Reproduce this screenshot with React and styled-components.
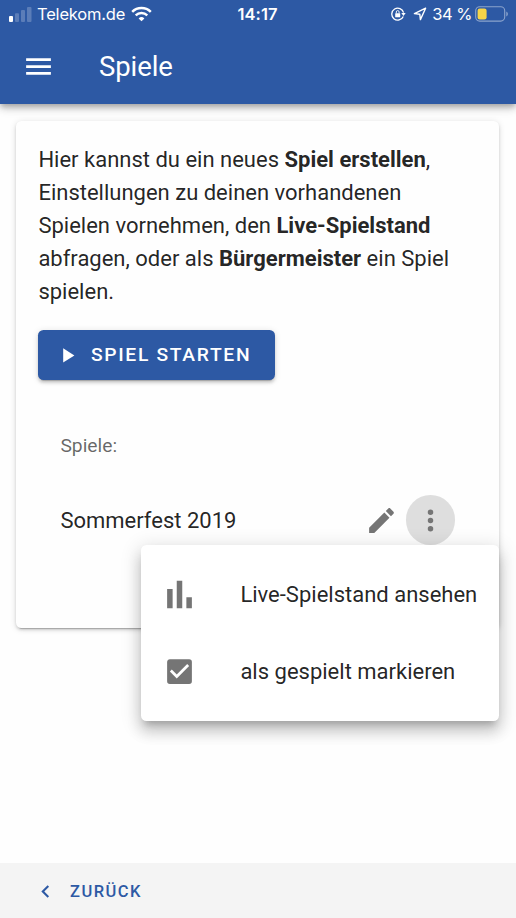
import React from "react";
import styled, { createGlobalStyle } from "styled-components";

const BLUE = "#2d59a4";
const INK = "rgba(0, 0, 0, 0.87)";
const GREY = "#757575";

const GlobalStyle = createGlobalStyle`
  * { box-sizing: border-box; }
  body {
    margin: 0;
    background: #fefefe;
    font-family: Roboto, "Liberation Sans", sans-serif;
    color: ${INK};
  }
  button { border: 0; margin: 0; padding: 0; background: none; font: inherit; color: inherit; }
`;

const Screen = styled.div`
  height: 918px;
  display: flex;
  flex-direction: column;
  overflow: hidden;
`;

const Header = styled.header`
  flex: none;
  height: 104px;
  background: ${BLUE};
  color: #fff;
  z-index: 1;
  box-shadow: 0 3px 5px -1px rgba(0, 0, 0, 0.2), 0 5px 7px rgba(0, 0, 0, 0.14),
    0 1px 14px rgba(0, 0, 0, 0.12);
`;

const StatusBar = styled.div`
  height: 28px;
  padding: 0 8px 0 9px;
  display: grid;
  grid-template-columns: 1fr auto 1fr;
  align-items: center;
  font: 400 16.5px/28px Inter, "Liberation Sans", sans-serif;
`;

const StatusGroup = styled.div`
  display: flex;
  align-items: center;
  justify-content: ${(p) => (p.$end ? "flex-end" : "flex-start")};
  height: 28px;
`;

const Carrier = styled.span`
  margin: 0 6px 0 5px;
  letter-spacing: -0.2px;
`;

const Clock = styled.time`
  font-weight: 600;
  letter-spacing: 0.1px;
  transform: translateX(-1px);
`;

const Percent = styled.span`
  margin: 0 3px 0 5px;
  letter-spacing: -0.5px;
`;

const Toolbar = styled.div`
  height: 76px;
  padding: 0 22px;
  display: flex;
  align-items: center;
`;

const ToolbarTitle = styled.h1`
  margin: 0 0 0 44px;
  font-size: 27.5px;
  font-weight: 400;
  line-height: 41px;
  letter-spacing: -0.1px;
`;

const Icon = styled.svg`
  display: block;
  flex: none;
  width: ${(p) => p.$size}px;
  height: ${(p) => p.$size}px;
  fill: currentColor;
`;

const Content = styled.main`
  flex: 1;
  min-height: 0;
  padding: 17px 17px 0 16px;
`;

const Card = styled.section`
  height: 506.5px;
  padding: 21.5px 21.6px 22px 22.4px;
  border-radius: 5.5px;
  background: #fefefe;
  box-shadow: 0 4px 1px -3px rgba(0, 0, 0, 0.2), 0 2px 3px rgba(0, 0, 0, 0.14),
    0 1px 7px rgba(0, 0, 0, 0.12);
`;

const Intro = styled.p`
  margin: 0 0 22.5px;
  font-size: 22px;
  line-height: 33px;
`;

const StartButton = styled.button`
  display: flex;
  align-items: center;
  width: 237px;
  height: 49.5px;
  padding: 0 17px;
  gap: 11px;
  border-radius: 5.5px;
  background: ${BLUE};
  color: #fff;
  font-size: 19.27px;
  font-weight: 500;
  letter-spacing: 1.68px;
  white-space: nowrap;
  box-shadow: 0 4px 1px -3px rgba(0, 0, 0, 0.2), 0 3px 3px rgba(0, 0, 0, 0.14),
    0 1px 7px rgba(0, 0, 0, 0.12);
`;

const List = styled.div`
  margin-top: 33px;
  padding: 0 22px;
`;

const Subheader = styled.div`
  height: 66px;
  display: flex;
  align-items: center;
  font-size: 19.27px;
  color: rgba(0, 0, 0, 0.6);
`;

const GameRow = styled.div`
  position: relative;
  height: 83px;
  display: flex;
  align-items: center;
  font-size: 22px;
`;

const GameName = styled.span`
  flex: 1;
`;

const IconButton = styled.button`
  display: grid;
  place-items: center;
  width: 49.5px;
  height: 49.5px;
  border-radius: 50%;
  color: ${GREY};
  background: ${(p) => (p.$active ? "#dedede" : "transparent")};
`;

const Menu = styled.div`
  position: absolute;
  top: 66px;
  right: -44px;
  width: 358px;
  height: 176px;
  padding: 11px 0;
  border-radius: 5.5px;
  background: #fff;
  box-shadow: 0 7px 7px -4px rgba(0, 0, 0, 0.2), 0 11px 14px 1px rgba(0, 0, 0, 0.14),
    0 4px 19px 3px rgba(0, 0, 0, 0.12);
`;

const MenuItem = styled.div`
  height: 77px;
  padding: 0 22px 0 21.5px;
  display: flex;
  align-items: center;
  gap: 44.5px;
  white-space: nowrap;

  svg { color: ${GREY}; }
`;

const Footer = styled.footer`
  flex: none;
  height: 55px;
  padding: 0 33px;
  background: #f4f4f4;
`;

const BackButton = styled.button`
  height: 56px;
  display: flex;
  align-items: center;
  gap: 12px;
  color: ${BLUE};
  font-size: 16.5px;
  font-weight: 500;
  letter-spacing: 1.47px;
`;

const PATHS = {
  menu: "M3 6h18v2H3V6m0 5h18v2H3v-2m0 5h18v2H3v-2z",
  play: "M8 5.14v14l11-7-11-7z",
  pencil:
    "M20.71 7.04c.39-.39.39-1.04 0-1.41l-2.34-2.34c-.37-.39-1.02-.39-1.41 0l-1.84 1.83 3.75 3.75M3 17.25V21h3.75L17.81 9.93l-3.75-3.75L3 17.25z",
  dots: "M12 16a2 2 0 1 1 0 4 2 2 0 0 1 0-4m0-6a2 2 0 1 1 0 4 2 2 0 0 1 0-4m0-6a2 2 0 1 1 0 4 2 2 0 0 1 0-4z",
  chart: "M3 22V8h4v14H3m7 0V2h4v20h-4m7 0v-8h4v8h-4z",
  checkbox:
    "M10 17l-5-5 1.41-1.42L10 14.17l7.59-7.59L19 8m0-5H5c-1.11 0-2 .89-2 2v14a2 2 0 0 0 2 2h14a2 2 0 0 0 2-2V5a2 2 0 0 0-2-2z",
  chevron: "M15.41 16.58 10.83 12l4.58-4.59L14 6l-6 6 6 6 1.41-1.42z",
};

const MdIcon = ({ name, size = 33 }) => (
  <Icon $size={size} viewBox="0 0 24 24" aria-hidden="true">
    <path d={PATHS[name]} />
  </Icon>
);

const StatusSvg = styled.svg`
  display: block;
  flex: none;
  margin-right: ${(p) => p.$gap || 0}px;
`;

const Signal = () => (
  <StatusSvg width="23" height="16" fill="#fff">
    <rect x="0" y="10" width="4" height="6" rx="1" />
    <g opacity="0.22">
      <rect x="6" y="7.2" width="4" height="8.8" rx="1" />
      <rect x="12" y="4" width="4" height="12" rx="1" />
      <rect x="18" y="1" width="4.5" height="15" rx="1" />
    </g>
  </StatusSvg>
);

const Wifi = () => (
  <StatusSvg width="21" height="16" viewBox="0 0 21 16" fill="none" stroke="#fff">
    <path d="M1.2 5.8a13.3 13.3 0 0 1 18.6 0" strokeWidth="2.5" />
    <path d="M4.7 9.3a8.3 8.3 0 0 1 11.6 0" strokeWidth="2.4" />
    <path d="M10.5 15.3 7.6 12.4a4.2 4.2 0 0 1 5.8 0z" fill="#fff" stroke="none" />
  </StatusSvg>
);

const RotationLock = () => (
  <StatusSvg $gap={7} width="15" height="14" viewBox="0 0 15 14" fill="none" stroke="#fff">
    <path d="M12.3 9.5A6 6 0 1 1 12.6 5.6" strokeWidth="1.3" />
    <path d="M10.3 6h4.4l-2.2 2.9z" fill="#fff" stroke="none" />
    <rect x="4.2" y="6.2" width="5" height="4" rx="0.5" fill="#fff" stroke="none" />
    <path d="M5.3 6.4V5a1.4 1.4 0 0 1 2.8 0v1.4" strokeWidth="0.9" />
  </StatusSvg>
);

const Location = () => (
  <StatusSvg width="14" height="14" viewBox="0 0 14 14" fill="none" stroke="#fff">
    <path d="M12.6 1.2 1.4 6.6l5.4.6.6 5.4z" strokeWidth="1.4" strokeLinejoin="round" />
  </StatusSvg>
);

const Battery = () => (
  <StatusSvg width="33" height="16" viewBox="0 0 33 16">
    <rect x="0.7" y="0.7" width="29" height="14.4" rx="4" fill="none" stroke="#fff" strokeOpacity="0.45" strokeWidth="1.1" />
    <rect x="2.6" y="2.6" width="9" height="10.8" rx="2.2" fill="#f7d548" />
    <path d="M31.4 5.5q1.4.6 1.4 2.5t-1.4 2.5z" fill="#fff" fillOpacity="0.5" />
  </StatusSvg>
);

export default function App() {
  return (
    <Screen>
      <GlobalStyle />
      <Header>
        <StatusBar>
          <StatusGroup>
            <Signal />
            <Carrier>Telekom.de</Carrier>
            <Wifi />
          </StatusGroup>
          <Clock>14:17</Clock>
          <StatusGroup $end>
            <RotationLock />
            <Location />
            <Percent>34 %</Percent>
            <Battery />
          </StatusGroup>
        </StatusBar>
        <Toolbar>
          <button aria-label="Menü">
            <MdIcon name="menu" />
          </button>
          <ToolbarTitle>Spiele</ToolbarTitle>
        </Toolbar>
      </Header>
      <Content>
        <Card>
          <Intro>
            Hier kannst du ein neues <b>Spiel erstellen</b>, Einstellungen zu deinen
            vorhandenen Spielen vornehmen, den <b>Live-Spielstand</b> abfragen, oder als{" "}
            <b>Bürgermeister</b> ein Spiel spielen.
          </Intro>
          <StartButton>
            <MdIcon name="play" size={24.5} />
            SPIEL STARTEN
          </StartButton>
          <List>
            <Subheader>Spiele:</Subheader>
            <GameRow>
              <GameName>Sommerfest 2019</GameName>
              <IconButton aria-label="Bearbeiten">
                <MdIcon name="pencil" />
              </IconButton>
              <IconButton $active aria-label="Mehr">
                <MdIcon name="dots" />
              </IconButton>
              <Menu>
                <MenuItem>
                  <MdIcon name="chart" />
                  Live-Spielstand ansehen
                </MenuItem>
                <MenuItem>
                  <MdIcon name="checkbox" />
                  als gespielt markieren
                </MenuItem>
              </Menu>
            </GameRow>
          </List>
        </Card>
      </Content>
      <Footer>
        <BackButton>
          <MdIcon name="chevron" size={25} />
          ZURÜCK
        </BackButton>
      </Footer>
    </Screen>
  );
}
